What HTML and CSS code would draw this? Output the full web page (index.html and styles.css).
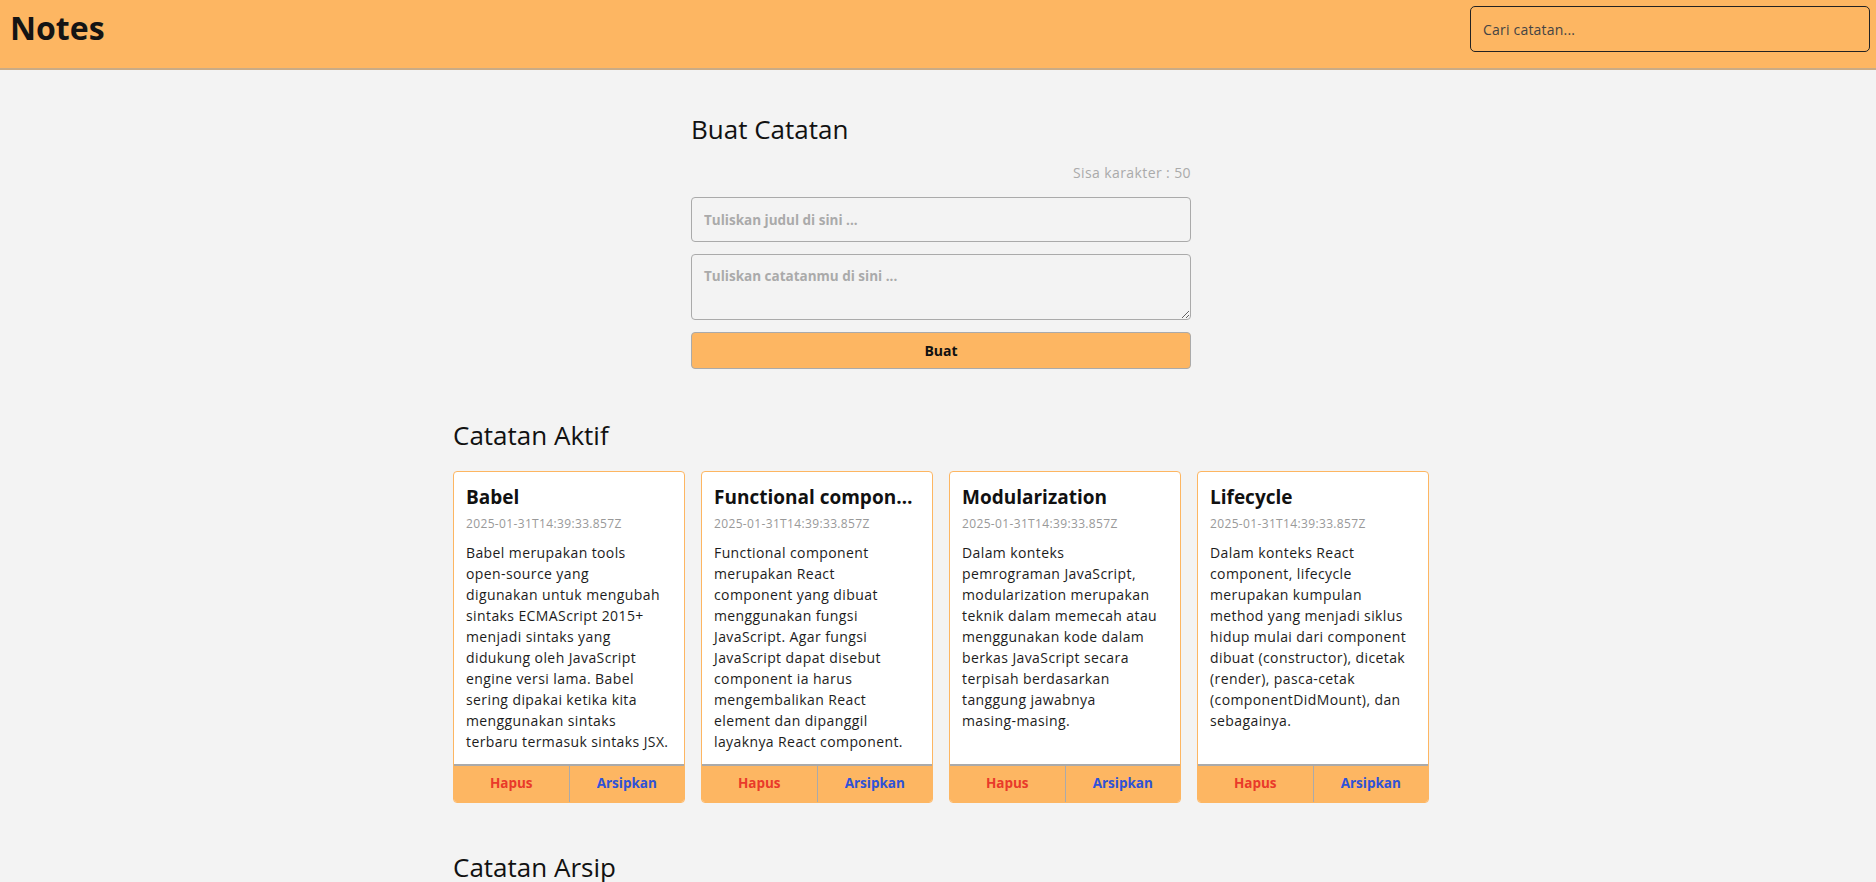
FILE: index.html
```html
<!DOCTYPE html>
<html lang="id">
<head>
<meta charset="utf-8">
<title>Notes</title>
<link rel="stylesheet" href="styles.css">
</head>
<body>
<header class="app-header">
  <h1 class="brand">Notes</h1>
  <input class="search" type="text" placeholder="Cari catatan...">
</header>
<main class="page">
  <section class="composer">
    <h2 class="section-title">Buat Catatan</h2>
    <p class="char-count">Sisa karakter : 50</p>
    <form class="composer-form">
      <input class="field title-field" type="text" placeholder="Tuliskan judul di sini ...">
      <textarea class="field body-field" placeholder="Tuliskan catatanmu di sini ..."></textarea>
      <button class="submit" type="button">Buat</button>
    </form>
  </section>

  <section class="notes-section">
    <h2 class="section-title">Catatan Aktif</h2>
    <div class="notes-grid">
      <article class="note">
        <div class="note-content">
          <h3 class="note-title">Babel</h3>
          <p class="note-date">2025-01-31T14:39:33.857Z</p>
          <p class="note-body">Babel merupakan tools
            open-source yang
            digunakan untuk mengubah
            sintaks ECMAScript 2015+
            menjadi sintaks yang
            didukung oleh JavaScript
            engine versi lama. Babel
            sering dipakai ketika kita
            menggunakan sintaks
            terbaru termasuk sintaks JSX.</p>
        </div>
        <div class="note-actions">
          <button class="action delete" type="button">Hapus</button>
          <button class="action archive" type="button">Arsipkan</button>
        </div>
      </article>
      <article class="note">
        <div class="note-content">
          <h3 class="note-title">Functional component</h3>
          <p class="note-date">2025-01-31T14:39:33.857Z</p>
          <p class="note-body">Functional component
            merupakan React
            component yang dibuat
            menggunakan fungsi
            JavaScript. Agar fungsi
            JavaScript dapat disebut
            component ia harus
            mengembalikan React
            element dan dipanggil
            layaknya React component.</p>
        </div>
        <div class="note-actions">
          <button class="action delete" type="button">Hapus</button>
          <button class="action archive" type="button">Arsipkan</button>
        </div>
      </article>
      <article class="note">
        <div class="note-content">
          <h3 class="note-title">Modularization</h3>
          <p class="note-date">2025-01-31T14:39:33.857Z</p>
          <p class="note-body">Dalam konteks
            pemrograman JavaScript,
            modularization merupakan
            teknik dalam memecah atau
            menggunakan kode dalam
            berkas JavaScript secara
            terpisah berdasarkan
            tanggung jawabnya
            masing-masing.</p>
        </div>
        <div class="note-actions">
          <button class="action delete" type="button">Hapus</button>
          <button class="action archive" type="button">Arsipkan</button>
        </div>
      </article>
      <article class="note">
        <div class="note-content">
          <h3 class="note-title">Lifecycle</h3>
          <p class="note-date">2025-01-31T14:39:33.857Z</p>
          <p class="note-body">Dalam konteks React
            component, lifecycle
            merupakan kumpulan
            method yang menjadi siklus
            hidup mulai dari component
            dibuat (constructor), dicetak
            (render), pasca-cetak
            (componentDidMount), dan
            sebagainya.</p>
        </div>
        <div class="note-actions">
          <button class="action delete" type="button">Hapus</button>
          <button class="action archive" type="button">Arsipkan</button>
        </div>
      </article>
    </div>
  </section>

  <section class="archive-section">
    <h2 class="section-title">Catatan Arsip</h2>
  </section>
</main>
</body>
</html>
```

FILE: styles.css
```css
html, body {
  margin: 0;
  background: #f3f3f3;
}

body {
  font-family: "Open Sans", "Noto Sans", sans-serif;
  color: #111;
}

.app-header {
  display: flex;
  justify-content: space-between;
  align-items: flex-start;
  height: 62px;
  padding: 6px 6px 0 10px;
  background: #fdb662;
  border-bottom: 2px solid #c9ab86;
}

.brand {
  margin: 0;
  font-size: 32px;
  font-weight: 700;
  line-height: 44px;
  color: #141414;
}

.search {
  box-sizing: border-box;
  width: 400px;
  height: 46px;
  padding: 0 12px;
  border: 1px solid #222;
  border-radius: 5px;
  background: transparent;
  font-family: "Open Sans", sans-serif;
  font-size: 14px;
  letter-spacing: 0.2px;
  color: #333;
  outline: none;
}

.search::placeholder {
  color: #444;
}

.page {
  width: 976px;
  margin: 0 0 0 calc(50% - 485px);
  padding-top: 41px;
}

.composer {
  width: 500px;
  margin: 0 auto;
}

.section-title {
  margin: 0;
  font-size: 26px;
  font-weight: 400;
  line-height: 36px;
  color: #111;
}

.char-count {
  margin: 16px 0 14px;
  text-align: right;
  font-size: 14px;
  line-height: 20px;
  letter-spacing: 0.4px;
  color: #aaa;
}

.composer-form {
  display: flex;
  flex-direction: column;
  gap: 12px;
}

.field {
  box-sizing: border-box;
  width: 100%;
  border: 1px solid #aaa;
  border-radius: 4px;
  background: transparent;
  font-family: "Open Sans", sans-serif;
  font-size: 13.5px;
  font-weight: 700;
  line-height: 18px;
  color: #222;
  outline: none;
}

.field::placeholder {
  color: #aaa;
}

.title-field {
  height: 45px;
  padding: 0 12px;
}

.body-field {
  height: 66px;
  padding: 12px;
  display: block;
}

.submit {
  box-sizing: border-box;
  height: 37px;
  border: 1px solid #aaa;
  border-radius: 4px;
  background: #fdb662;
  font-family: "Open Sans", sans-serif;
  font-size: 14px;
  font-weight: 700;
  color: #111;
}

.notes-section {
  margin-top: 48px;
}

.notes-grid {
  display: grid;
  grid-template-columns: repeat(4, 1fr);
  gap: 16px;
  margin-top: 18px;
}

.note {
  display: flex;
  flex-direction: column;
  border: 1px solid #fdb662;
  border-radius: 4px;
  background: #fff;
  overflow: hidden;
}

.note-content {
  flex: 1;
  padding: 12px;
  min-width: 0;
}

.note-title {
  margin: 0;
  font-size: 19px;
  font-weight: 700;
  line-height: 26px;
  color: #111;
  white-space: nowrap;
  overflow: hidden;
  text-overflow: ellipsis;
}

.note-date {
  margin: 5px 0 0;
  font-size: 12px;
  line-height: 18px;
  letter-spacing: 0.35px;
  color: #999;
}

.note-body {
  margin: 9px 0 0;
  font-size: 14px;
  line-height: 21px;
  letter-spacing: 0.4px;
  color: #1c1c1c;
  white-space: pre-line;
}

.note-actions {
  display: flex;
  border-top: 2px solid #aaa;
  background: #fdb662;
}

.action {
  flex: 1;
  height: 36px;
  padding: 0 0 2px;
  border: 0;
  background: transparent;
  font-family: "Open Sans", sans-serif;
  font-size: 13.5px;
  font-weight: 700;
}

.action + .action {
  border-left: 1px solid #aaa;
}

.delete {
  color: #e93a2a;
}

.archive {
  color: #2f52d8;
}

.archive-section {
  margin-top: 46px;
}
```
